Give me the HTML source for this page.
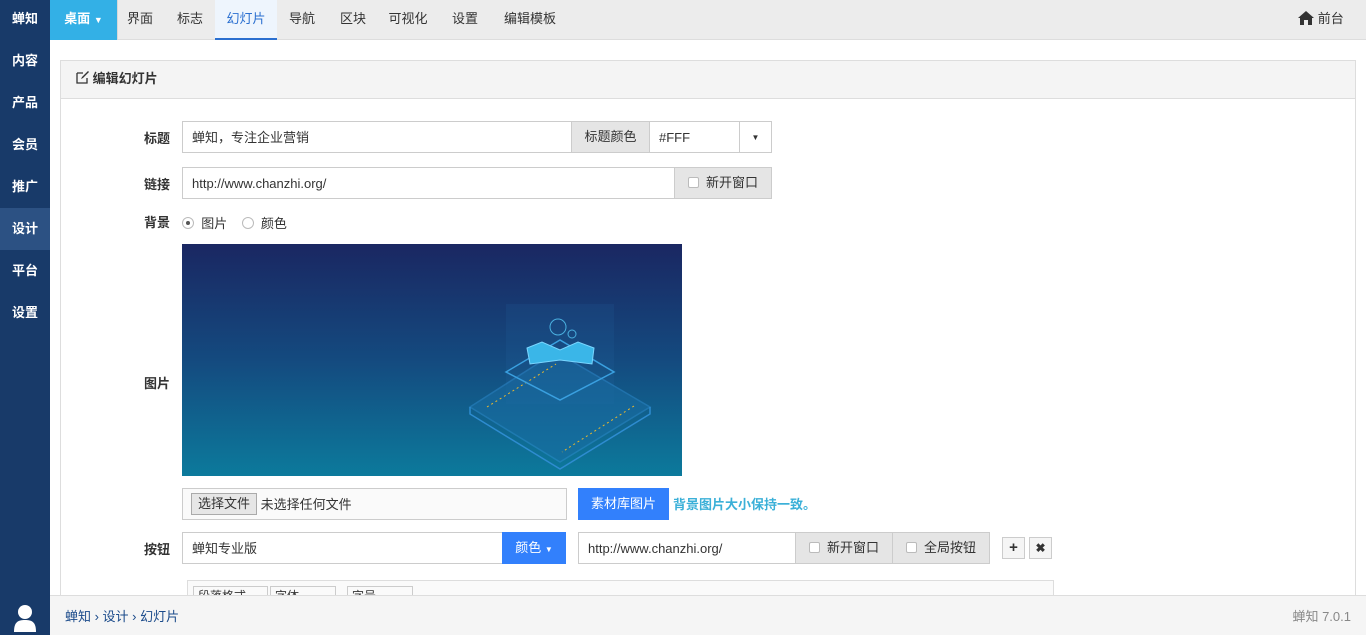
<!DOCTYPE html>
<html><head><meta charset="utf-8"><style>
*{box-sizing:border-box;margin:0;padding:0}
body{width:1366px;height:635px;overflow:hidden;font-family:"Liberation Sans","Noto Sans CJK SC",sans-serif;font-size:13px;color:#333;background:#fff;position:relative}
.abs{position:absolute}
#side{left:0;top:0;width:50px;height:635px;background:#183a69}
#side div{position:absolute;left:0;width:50px;height:42px;line-height:42px;text-align:center;color:#fff;font-size:13px;font-weight:bold}
#top{left:50px;top:0;width:1316px;height:40px;background:#ececec;border-bottom:1px solid #ddd}
.tab{position:absolute;top:0;height:40px;line-height:38px;font-size:13px;color:#333;text-align:center}
.inp{position:absolute;border:1px solid #ccc;background:#fff;height:32px;line-height:32px;padding-left:9px;font-size:13px}
.add{position:absolute;border:1px solid #ccc;background:#e5e5e5;height:32px;line-height:30px;text-align:center;font-size:13px}
.lbl{position:absolute;width:60px;left:110px;text-align:right;font-size:13px;font-weight:bold;color:#333}
.cb{display:inline-block;width:11px;height:11px;border:1px solid #bbb;border-radius:2px;background:#fff;vertical-align:-1px;margin-right:7px}
.btn{position:absolute;background:#3280fc;color:#fff;text-align:center;font-size:13px}
</style></head><body>
<div id="side" class="abs">
<div style="top:0;height:40px;line-height:38px">蝉知</div>
<div style="top:40px">内容</div>
<div style="top:82px">产品</div>
<div style="top:124px">会员</div>
<div style="top:166px">推广</div>
<div style="top:208px;background:#2c5183">设计</div>
<div style="top:250px">平台</div>
<div style="top:292px">设置</div>
<svg style="position:absolute;left:13px;top:604px" width="24" height="28" viewBox="0 0 24 28"><circle cx="12" cy="8" r="7" fill="#fff"/><path d="M1 28 C1 18 5 16 12 16 C19 16 23 18 23 28Z" fill="#fff"/></svg>
</div>
<div id="top" class="abs">
<div class="tab" style="left:0;width:67px;background:#33b0e6;color:#fff;font-weight:bold">桌面 <span style="font-size:9px">▼</span></div>
<div class="tab" style="left:67px;width:1px;background:#d8d8d8"></div>
<div class="tab" style="left:68px;width:44px">界面</div>
<div class="tab" style="left:116px;width:48px">标志</div>
<div class="tab" style="left:165px;width:62px;background:#eef5fd;color:#2a6fd0;border-bottom:2px solid #2a6fd0">幻灯片</div>
<div class="tab" style="left:228px;width:48px">导航</div>
<div class="tab" style="left:279px;width:48px">区块</div>
<div class="tab" style="left:329px;width:58px">可视化</div>
<div class="tab" style="left:391px;width:48px">设置</div>
<div class="tab" style="left:447px;width:66px">编辑模板</div>
<div class="tab" style="left:1246px;width:50px"><svg width="16" height="14" viewBox="0 0 16 14" style="vertical-align:-2px"><path d="M8 0 L0 7 L2 7 L2 14 L6 14 L6 9 L10 9 L10 14 L14 14 L14 7 L16 7Z" fill="#333"/></svg> 前台</div>
</div>
<div class="abs" style="left:60px;top:60px;width:1296px;height:560px;border:1px solid #ddd;border-bottom:none">
<div style="height:38px;background:#f4f4f4;border-bottom:1px solid #ddd;line-height:36px;padding-left:15px;font-weight:bold">
<svg width="13" height="13" viewBox="0 0 13 13" style="vertical-align:-1px"><path d="M1 2h6M1 2v10h10V7" stroke="#333" stroke-width="1.3" fill="none"/><path d="M5 8l1-2 6-6 1 1-6 6z" fill="#333"/></svg> 编辑幻灯片</div>
</div>
<div class="lbl" style="top:128px">标题</div>
<div class="inp" style="left:182px;top:121px;width:390px">蝉知，专注企业营销</div>
<div class="add" style="left:571px;top:121px;width:79px">标题颜色</div>
<div class="inp" style="left:649px;top:121px;width:91px">#FFF</div>
<div class="inp" style="left:739px;top:121px;width:33px;padding:0;text-align:center;font-size:8px">▼</div>
<div class="lbl" style="top:174px">链接</div>
<div class="inp" style="left:182px;top:167px;width:493px">http://www.chanzhi.org/</div>
<div class="add" style="left:674px;top:167px;width:98px"><span class="cb"></span>新开窗口</div>
<div class="lbl" style="top:212px">背景</div>
<div class="abs" style="left:182px;top:213px;font-size:13px"><span style="display:inline-block;width:12px;height:12px;border:1px solid #bbb;border-radius:50%;vertical-align:-1px;position:relative;background:#fff"><span style="position:absolute;left:3px;top:3px;width:4px;height:4px;border-radius:50%;background:#555"></span></span>&nbsp; 图片 &nbsp;&nbsp; <span style="display:inline-block;width:12px;height:12px;border:1px solid #bbb;border-radius:50%;vertical-align:-1px;background:#fff"></span>&nbsp; 颜色</div>
<div class="lbl" style="top:373px">图片</div>
<svg class="abs" style="left:182px;top:244px" width="500" height="232" viewBox="0 0 500 232">
<defs><linearGradient id="g" x1="0" y1="0" x2="0" y2="1"><stop offset="0" stop-color="#1a2762"/><stop offset="0.5" stop-color="#144a7f"/><stop offset="1" stop-color="#0c7a9c"/></linearGradient></defs>
<rect width="500" height="232" fill="url(#g)"/>
<rect x="324" y="60" width="108" height="100" fill="#2a6aa8" opacity="0.15"/>
<path d="M288 163 L374 108 L468 163 L378 218Z" fill="#1a6ea6" opacity="0.5" stroke="#2e8cd0" stroke-width="1.5"/>
<path d="M288 163 L288 170 L378 225 L468 170 L468 163" fill="none" stroke="#2e8cd0" stroke-width="1.5"/>
<path d="M305 163 L374 120 M452 162 L380 208" stroke="#e8b830" stroke-width="1" stroke-dasharray="2 3"/>
<path d="M324 128 L378 96 L432 128 L378 156Z" fill="none" stroke="#3aa0e0" stroke-width="1.5"/>
<path d="M345 104 L360 98 L378 106 L396 98 L412 104 L410 120 L378 116 L348 120Z" fill="#3ab6e8" stroke="#7ad6ff"/>
<circle cx="376" cy="83" r="8" fill="none" stroke="#4ab0e0"/><circle cx="390" cy="90" r="4" fill="none" stroke="#4ab0e0"/>
</svg>
<div class="inp" style="left:182px;top:488px;width:385px;background:#fafafa;padding-left:8px"><span style="display:inline-block;border:1px solid #aaa;background:#e6e6e6;padding:0 6px;line-height:20px;vertical-align:1px">选择文件</span> 未选择任何文件</div>
<div class="btn" style="left:578px;top:488px;width:91px;height:32px;line-height:32px">素材库图片</div>
<div class="abs" style="left:673px;top:494px;color:#3bb0d8;font-weight:bold">背景图片大小保持一致。</div>
<div class="lbl" style="top:539px">按钮</div>
<div class="inp" style="left:182px;top:532px;width:321px">蝉知专业版</div>
<div class="btn" style="left:502px;top:532px;width:64px;height:32px;line-height:32px">颜色 <span style="font-size:8px">▼</span></div>
<div class="inp" style="left:578px;top:532px;width:218px">http://www.chanzhi.org/</div>
<div class="add" style="left:795px;top:532px;width:98px"><span class="cb"></span>新开窗口</div>
<div class="add" style="left:892px;top:532px;width:98px"><span class="cb"></span>全局按钮</div>
<div class="abs" style="left:1002px;top:537px;width:23px;height:22px;border:1px solid #ccc;background:#f5f5f5;text-align:center;line-height:20px;font-weight:bold;font-size:15px">+</div>
<div class="abs" style="left:1029px;top:537px;width:23px;height:22px;border:1px solid #ccc;background:#f5f5f5;text-align:center;line-height:20px;font-weight:bold;font-size:12px">✖</div>
<div class="abs" style="left:187px;top:580px;width:867px;height:20px;border:1px solid #ddd;background:#fafafa">
<div class="abs" style="left:5px;top:5px;width:75px;height:20px;border:1px solid #ccc;font-size:12px;padding-left:4px">段落格式</div>
<div class="abs" style="left:82px;top:5px;width:66px;height:20px;border:1px solid #ccc;font-size:12px;padding-left:4px">字体</div>
<div class="abs" style="left:159px;top:5px;width:66px;height:20px;border:1px solid #ccc;font-size:12px;padding-left:4px">字号</div>
</div>
<div class="abs" style="left:50px;top:595px;width:1316px;height:40px;background:#f5f5f5;border-top:1px solid #ddd">
<div class="abs" style="left:15px;top:10px;color:#1a4a8a">蝉知 › 设计 › 幻灯片</div>
<div class="abs" style="right:15px;top:10px;color:#888">蝉知 7.0.1</div>
</div>
</body></html>
